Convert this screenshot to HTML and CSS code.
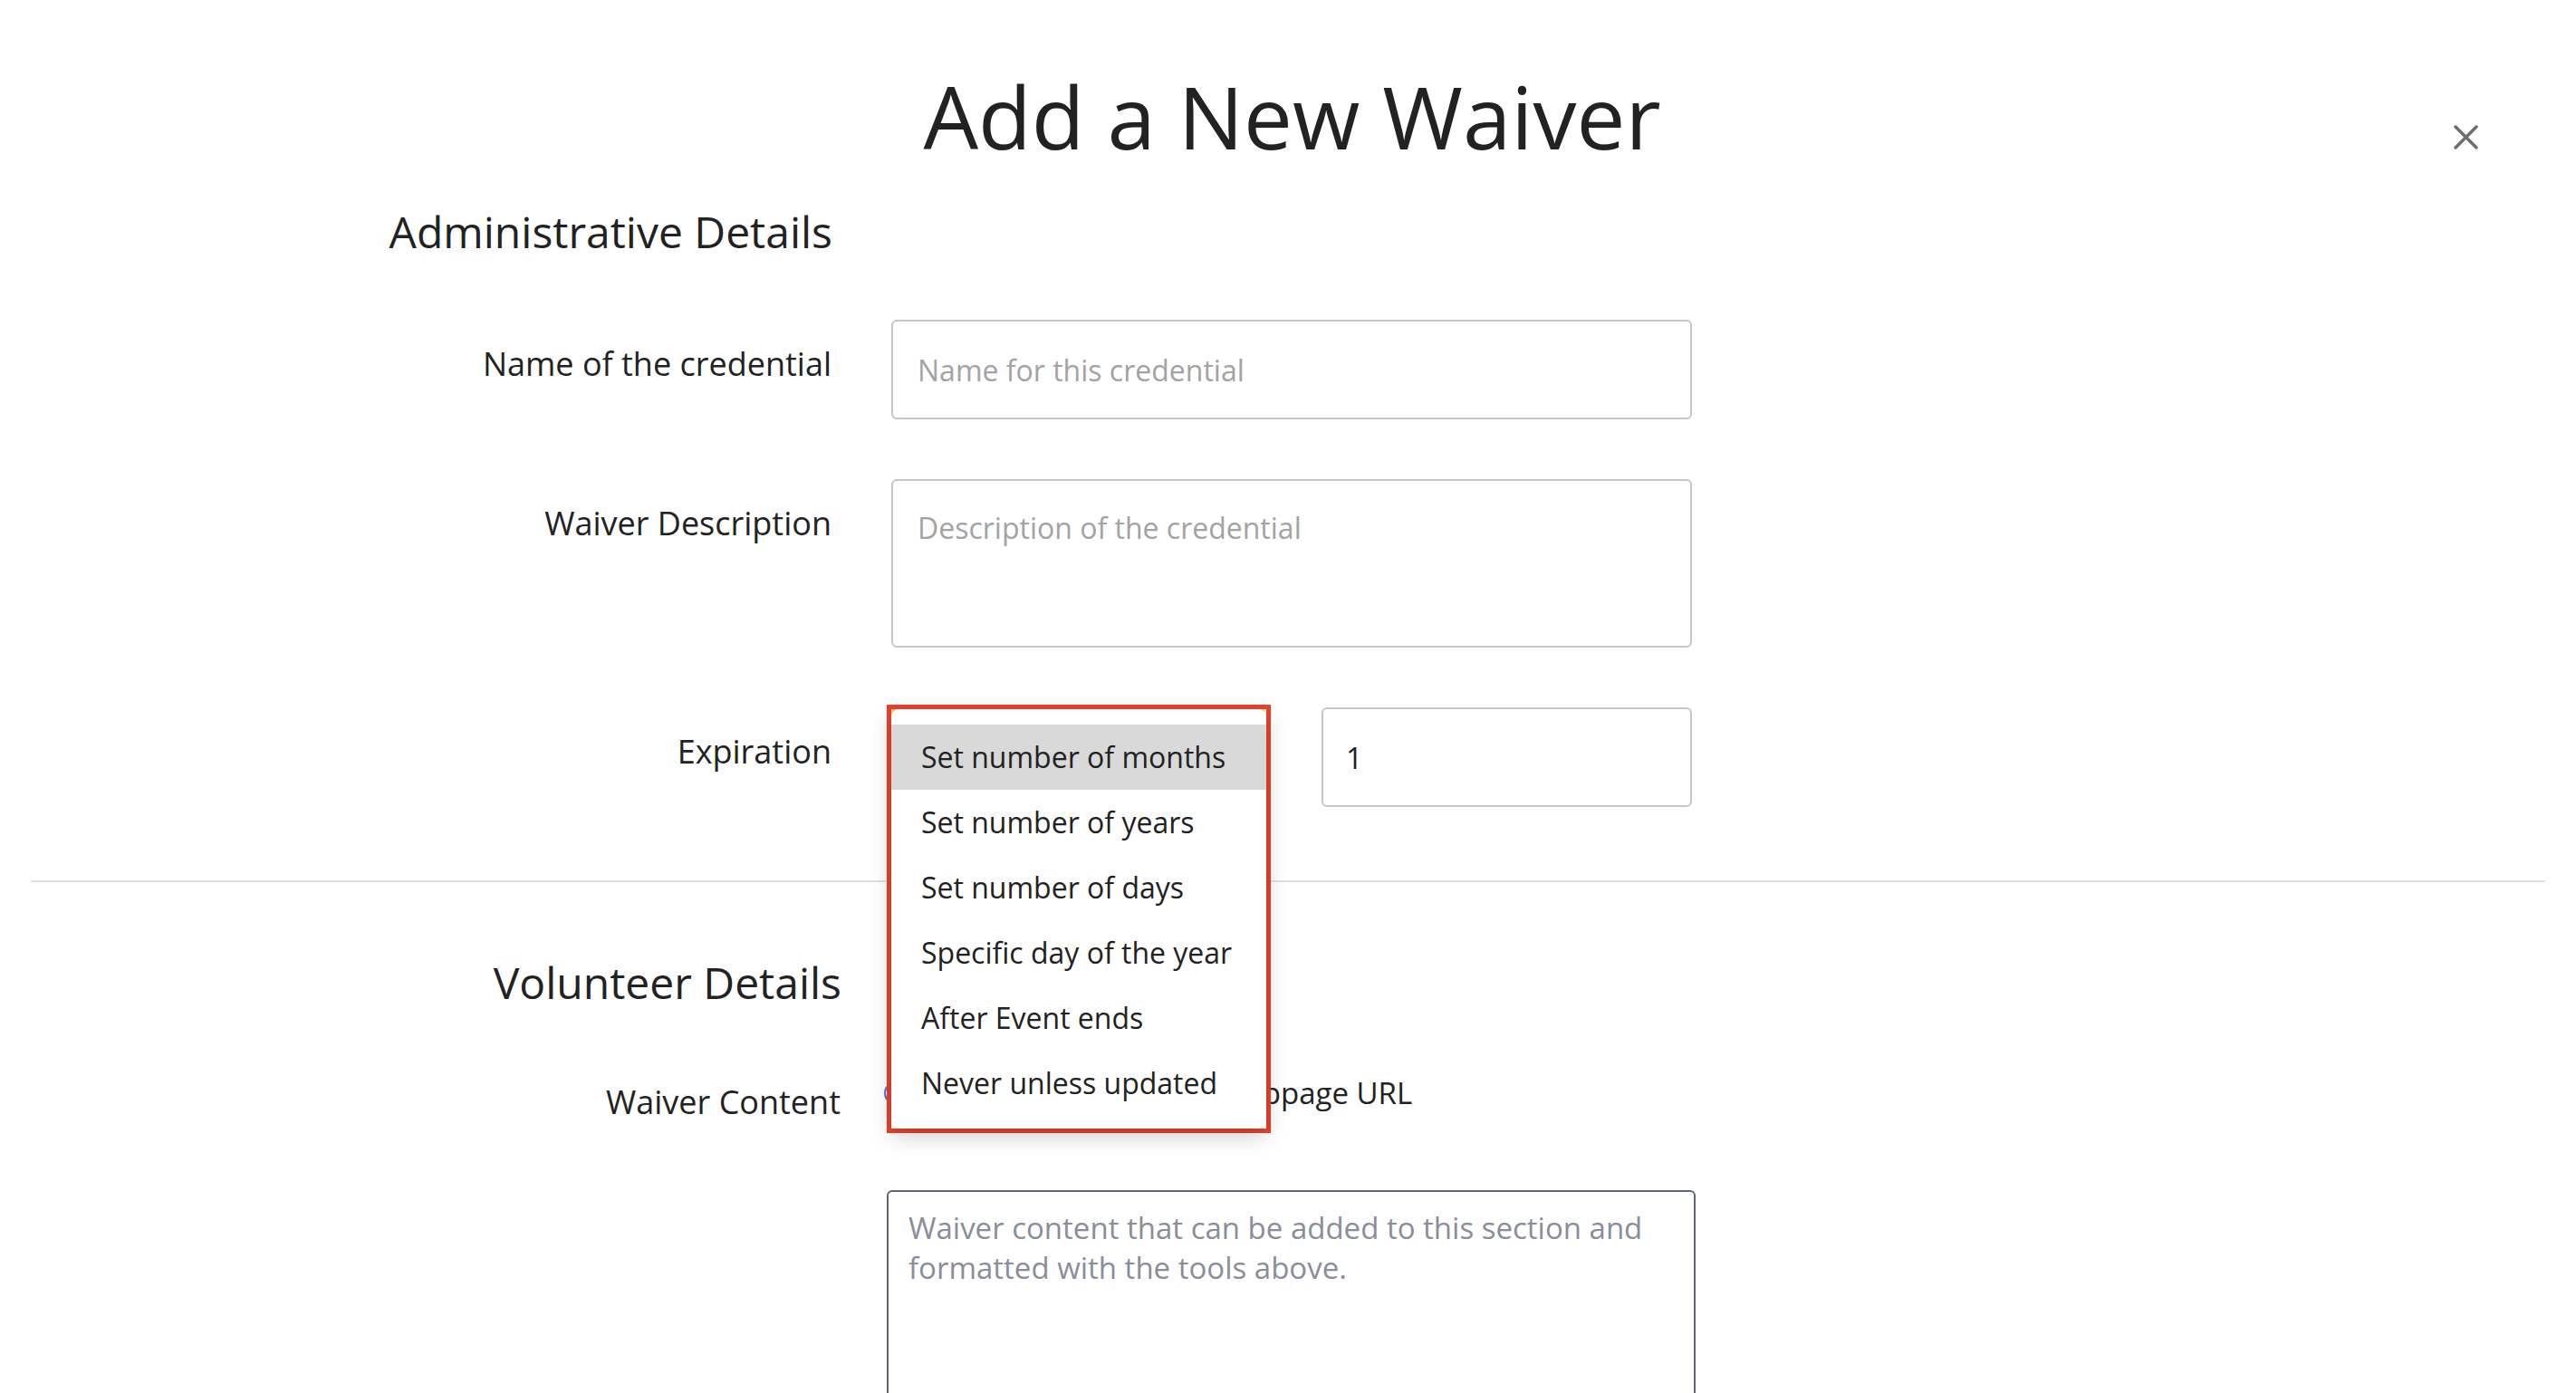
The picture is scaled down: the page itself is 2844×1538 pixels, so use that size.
FILE: index.html
```html
<!DOCTYPE html>
<html lang="en">
<head>
<meta charset="utf-8">
<title>Add a New Waiver</title>
<link rel="stylesheet" href="styles.css">
</head>
<body>
<div class="modal">
  <button class="close" type="button" aria-label="Close">
    <svg width="27" height="27" viewBox="0 0 27 27"><path d="M2 2 L25 25 M25 2 L2 25" stroke="#6e6e6e" stroke-width="3.5" stroke-linecap="round" fill="none"/></svg>
  </button>
  <h1 class="title">Add a New Waiver</h1>

  <section class="section admin">
    <h2 class="section-title">Administrative Details</h2>
    <div class="row">
      <label class="label">Name of the credential</label>
      <div class="field"><input class="input" type="text" placeholder="Name for this credential"></div>
    </div>
    <div class="row">
      <label class="label">Waiver Description</label>
      <div class="field"><textarea class="input textarea" placeholder="Description of the credential"></textarea></div>
    </div>
    <div class="row">
      <label class="label">Expiration</label>
      <div class="field expiration">
        <div class="select-wrap">
          <div class="select"></div>
          <div class="annotate">
            <ul class="menu">
              <li class="option active">Set number of months</li>
              <li class="option">Set number of years</li>
              <li class="option">Set number of days</li>
              <li class="option">Specific day of the year</li>
              <li class="option">After Event ends</li>
              <li class="option">Never unless updated</li>
            </ul>
          </div>
        </div>
        <input class="input number" type="text" value="1">
      </div>
    </div>
  </section>

  <hr class="divider">

  <section class="section volunteer">
    <h2 class="section-title">Volunteer Details</h2>
    <div class="row">
      <label class="label">Waiver Content</label>
      <div class="field">
        <div class="radios">
          <span class="radio checked"></span><span class="radio-text">Text</span>
          <span class="radio second"></span><span class="radio-text">Webpage URL</span>
        </div>
        <textarea class="content" placeholder="Waiver content that can be added to this section and formatted with the tools above."></textarea>
      </div>
    </div>
  </section>
</div>
</body>
</html>
```

FILE: styles.css
```css
* { box-sizing: border-box; }

html, body {
  margin: 0;
  padding: 0;
  background: #fff;
}

body {
  font-family: "Open Sans", "Noto Sans", sans-serif;
  color: #222;
  overflow: hidden;
}

.modal {
  position: relative;
  padding-top: 62px;
  height: 1538px;
}

.close {
  position: absolute;
  left: 2709px;
  top: 138px;
  width: 27px;
  height: 27px;
  padding: 0;
  border: 0;
  background: none;
}

.close svg { display: block; }

.title {
  margin: 0;
  padding-left: 9px;
  text-align: center;
  font-size: 96px;
  font-weight: 400;
  line-height: 131px;
  color: #222;
}

.section-title {
  margin: 0;
  font-size: 48px;
  font-weight: 400;
  line-height: 66px;
  text-align: right;
  color: #222;
}

.admin .section-title {
  width: 919px;
  margin-top: 30px;
}

.row { display: grid; align-items: start; }

.admin .row {
  grid-template-columns: 918px 884px;
  column-gap: 66px;
  margin-top: 66px;
}

.admin .row:first-of-type { margin-top: 64px; }

.label {
  font-size: 36px;
  line-height: 49px;
  text-align: right;
  padding-top: 24px;
  color: #222;
}

.input {
  display: block;
  width: 100%;
  height: 110px;
  border: 2px solid #c6c6c6;
  border-radius: 6px;
  font-family: "Open Sans", "Noto Sans", sans-serif;
  font-size: 32px;
  line-height: 44px;
  padding: 0 27px;
  color: #222;
  background: #fff;
  outline: none;
}

.input::placeholder {
  color: #a3a3a3;
  opacity: 1;
}

.textarea {
  height: 186px;
  padding: 30px 27px;
  resize: none;
}

.expiration {
  display: flex;
  gap: 62px;
}

.select-wrap {
  position: relative;
  width: 413px;
  flex: none;
}

.select {
  height: 110px;
  border: 3px solid #f2bd2b;
  border-radius: 6px;
}

.annotate {
  position: absolute;
  left: -5px;
  top: -3px;
  width: 424px;
  border: 5px solid #e8432b;
  z-index: 2;
}

.menu {
  list-style: none;
  margin: 0;
  padding: 17px 0 14px;
  background: #fff;
  border-radius: 8px;
  box-shadow: 0 8px 24px rgba(0, 0, 0, 0.2);
}

.option {
  height: 72px;
  line-height: 72px;
  padding-left: 33px;
  font-size: 32px;
  color: #222;
  white-space: nowrap;
}

.option.active { background: #d9d9d9; }

.number { flex: 1; padding-left: 25px; }

.divider {
  margin: 81px 34px 0;
  border: 0;
  height: 2px;
  background: #e0e0e0;
}

.volunteer .section-title {
  width: 929px;
  margin-top: 78px;
}

.volunteer .row {
  grid-template-columns: 928px 893px;
  column-gap: 51px;
  margin-top: 67px;
}

.volunteer .label { padding-top: 7px; }

.radios {
  display: flex;
  align-items: center;
  height: 44px;
  margin-left: -3px;
  font-size: 33px;
  line-height: 44px;
  color: #222;
}

.radio {
  width: 26px;
  height: 26px;
  flex: none;
  border-radius: 50%;
  border: 2px solid #8a8a8a;
  margin-right: 12px;
}

.radio.checked {
  border-color: #4f74e3;
  background: #4f74e3;
  box-shadow: inset 0 0 0 5px #fff;
}

.radio.second { margin-left: 227px; }

.content {
  display: block;
  width: 100%;
  height: 400px;
  margin-top: 85px;
  border: 2px solid #5f6478;
  border-radius: 6px;
  padding: 18px 22px;
  font-family: "Open Sans", "Noto Sans", sans-serif;
  font-size: 33px;
  line-height: 44px;
  color: #222;
  resize: none;
  outline: none;
}

.content::placeholder {
  color: #8a8d9a;
  opacity: 1;
}
```
